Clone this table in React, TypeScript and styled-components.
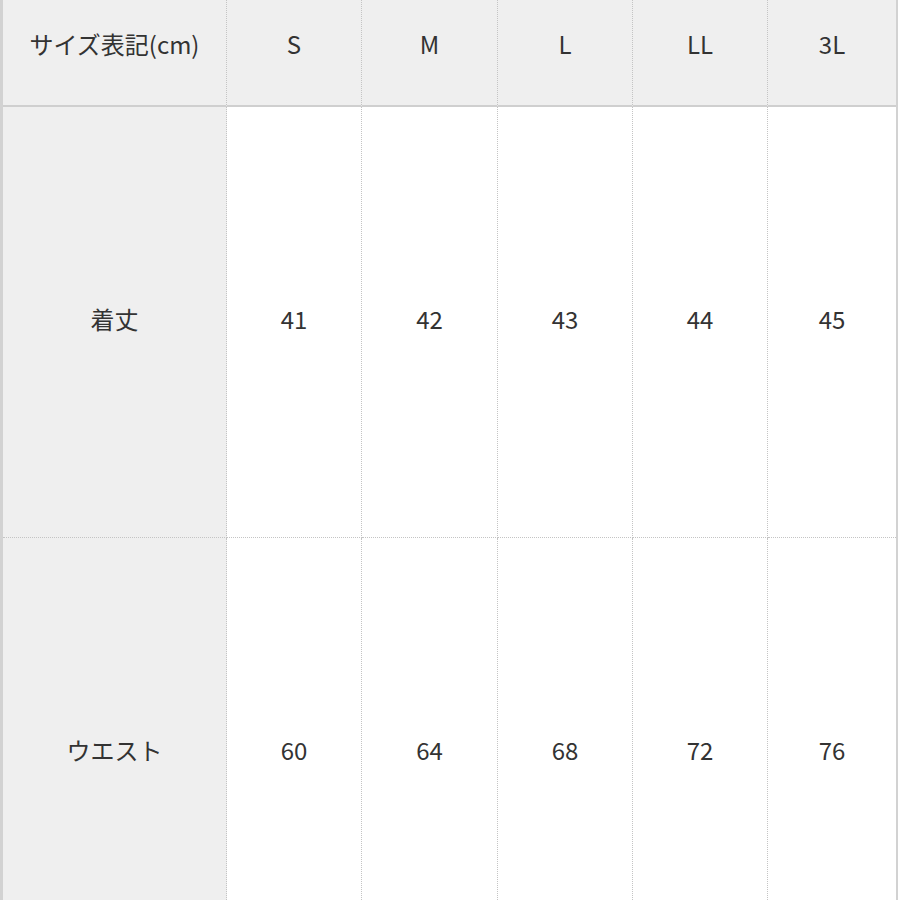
import React from "react";
import styled, { createGlobalStyle } from "styled-components";

const Global = createGlobalStyle`
  html, body { margin: 0; padding: 0; background: #ffffff; }
  body { font-family: "Noto Sans CJK JP", "Noto Sans", sans-serif; }
`;

const Table = styled.div`
  display: grid;
  grid-template-columns: 224px 135px 136px 135px 135px 1fr;
  grid-template-rows: 107px 431px 430px;
  width: 898px;
  box-sizing: border-box;
  border-left: 3px solid #d2d2d2;
  border-right: 2px solid #d2d2d2;
  color: #333333;
  font-size: 24px;
`;

const Cell = styled.div<{ $head?: boolean; $label?: boolean; $last?: boolean; $lastRow?: boolean }>`
  display: flex;
  align-items: center;
  justify-content: center;
  box-sizing: border-box;
  background: ${(p) => (p.$head || p.$label ? "#efefef" : "#ffffff")};
  border-right: ${(p) => (p.$last ? "none" : "1px dotted #c4c4c4")};
  border-bottom: ${(p) =>
    p.$head ? "2px solid #cfcfcf" : p.$lastRow ? "none" : "1px dotted #c4c4c4"};
  padding-bottom: ${(p) => (p.$head ? "18px" : "6px")};
  line-height: 1;
  white-space: nowrap;
`;

const headers = ["サイズ表記(cm)", "S", "M", "L", "LL", "3L"];
const rows: { label: string; values: string[] }[] = [
  { label: "着丈", values: ["41", "42", "43", "44", "45"] },
  { label: "ウエスト", values: ["60", "64", "68", "72", "76"] },
];

export default function App() {
  return (
    <>
      <Global />
      <Table>
        {headers.map((h, i) => (
          <Cell key={h} $head $last={i === headers.length - 1}>
            {h}
          </Cell>
        ))}
        {rows.map((r, ri) => (
          <React.Fragment key={r.label}>
            <Cell $label $lastRow={ri === rows.length - 1}>
              {r.label}
            </Cell>
            {r.values.map((v, vi) => (
              <Cell key={vi} $last={vi === r.values.length - 1} $lastRow={ri === rows.length - 1}>
                {v}
              </Cell>
            ))}
          </React.Fragment>
        ))}
      </Table>
    </>
  );
}
